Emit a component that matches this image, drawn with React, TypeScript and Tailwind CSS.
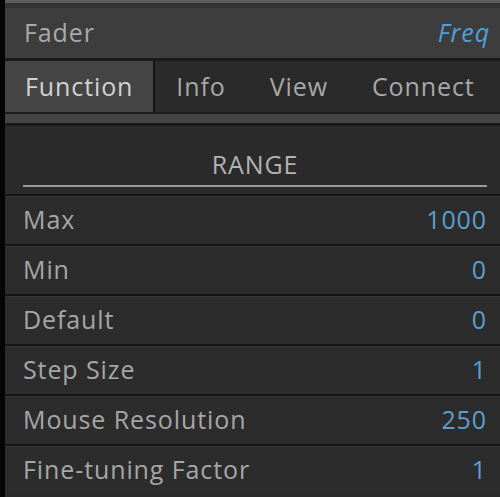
import React from "react";

const rows: [string, string][] = [
  ["Max", "1000"],
  ["Min", "0"],
  ["Default", "0"],
  ["Step Size", "1"],
  ["Mouse Resolution", "250"],
  ["Fine-tuning Factor", "1"],
];

export default function App() {
  return (
    <div
      className="w-[500px] h-[497px] overflow-hidden bg-[#2b2b2b] flex tracking-[0.9px]"
      style={{ fontFamily: '"Open Sans", "Noto Sans", sans-serif' }}
    >
      <div className="w-[5px] shrink-0 bg-[#050505]" />
      <div className="flex-1 flex flex-col min-w-0">
        <div className="h-[3px] bg-[#5c5c5c]" />
        <div className="h-[5px] bg-[#333333]" />
        <div className="h-[50px] bg-[#3d3d3d] flex items-center justify-between pl-[19px] pr-[10px] text-[25px] text-[#a9a9a9]">
          <span>Fader</span>
          <span className="italic text-[#4f9fd8]">Freq</span>
        </div>
        <div className="h-[3px] bg-[#1a1a1a]" />
        <div className="flex h-[51px] bg-[#2a2a2a] text-[25px]">
          <div className="px-[20px] bg-[#454545] text-[#d2d2d2] flex items-center border-r-2 border-[#151515]">
            Function
          </div>
          <div className="pl-[21px] pr-[22px] text-[#a8a8a8] flex items-center">Info</div>
          <div className="px-[22px] text-[#a8a8a8] flex items-center">View</div>
          <div className="px-[22px] text-[#a8a8a8] flex items-center">Connect</div>
        </div>
        <div className="h-[11px] bg-[#454545] border-t-2 border-[#1e1e1e]" />
        <div className="h-[3px] bg-[#1a1a1a]" />
        <div className="h-[68px] flex flex-col items-center justify-end pl-[18px] pr-[13px]">
          <div className="text-[25px] text-[#b2b2b2] leading-none mb-[8px]">RANGE</div>
          <div className="w-full h-[2px] bg-[#9a9a9a] mb-[7px]" />
        </div>
        {rows.map(([label, value]) => (
          <div
            key={label}
            className="h-[50px] shrink-0 border-t-2 border-[#151515] bg-[#2c2c2c] flex items-center justify-between pl-[18px] pr-[13px] text-[25px]"
            style={{ boxShadow: "inset 0 1px 0 #363636" }}
          >
            <span className="text-[#a6a6a6]">{label}</span>
            <span className="text-[#5a9fd0]">{value}</span>
          </div>
        ))}
      </div>
    </div>
  );
}
